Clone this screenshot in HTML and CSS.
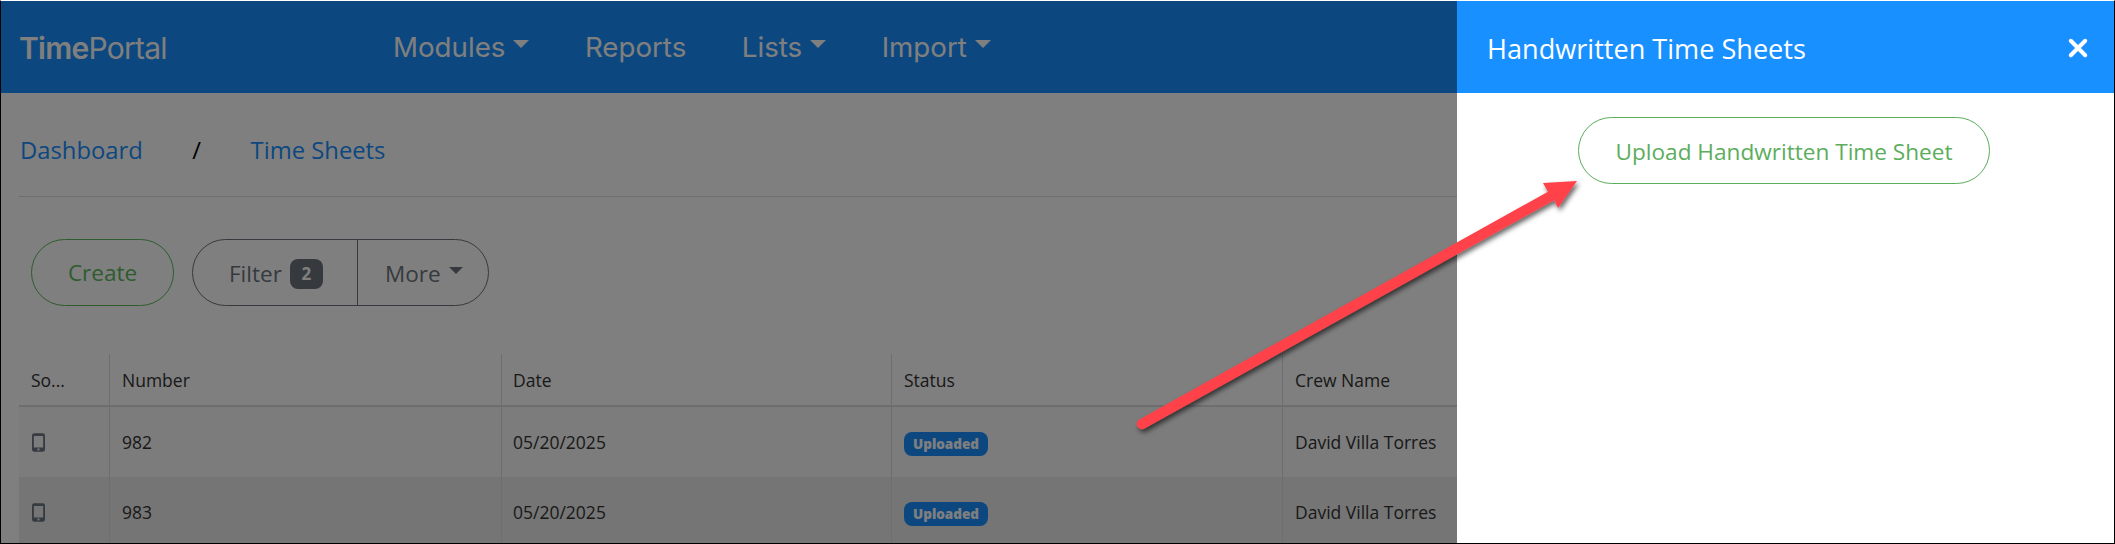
FILE: index.html
```html
<!DOCTYPE html>
<html lang="en">
<head>
<meta charset="utf-8">
<title>Handwritten Time Sheets</title>
<link rel="stylesheet" href="styles.css">
</head>
<body>
<div class="frame">
  <div class="app">
    <header class="topbar">
      <div class="brand"><b>Time</b>Portal</div>
      <nav class="nav">
        <span class="nav-item">Modules<i class="caret"></i></span>
        <span class="nav-item">Reports</span>
        <span class="nav-item">Lists<i class="caret"></i></span>
        <span class="nav-item">Import<i class="caret"></i></span>
      </nav>
    </header>
    <div class="crumbs">
      <span class="crumb">Dashboard</span>
      <span class="sep">/</span>
      <span class="crumb">Time Sheets</span>
    </div>
    <div class="toolbar">
      <button class="btn-create">Create</button>
      <div class="btn-group">
        <span class="filter">Filter <span class="count">2</span></span>
        <span class="more">More<i class="caret small"></i></span>
      </div>
    </div>
    <div class="table">
      <div class="row head">
        <div class="cell c1">So...</div>
        <div class="cell c2">Number</div>
        <div class="cell c3">Date</div>
        <div class="cell c4">Status</div>
        <div class="cell c5">Crew Name</div>
      </div>
      <div class="row body">
        <div class="cell c1"><svg class="phone" viewBox="0 0 14 20"><path fill-rule="evenodd" d="M2.5 0h9A2.5 2.5 0 0 1 14 2.5v15a2.5 2.5 0 0 1-2.5 2.5h-9A2.5 2.5 0 0 1 0 17.500v-15A2.500 2.500 0 0 1 2.500 0zM2 3v12.500h10V3zM7 16.300a1.200 1.200 0 1 0 0 2.400 1.200 1.200 0 0 0 0-2.400z"/></svg></div>
        <div class="cell c2">982</div>
        <div class="cell c3">05/20/2025</div>
        <div class="cell c4"><span class="badge">Uploaded</span></div>
        <div class="cell c5">David Villa Torres</div>
      </div>
      <div class="row body alt">
        <div class="cell c1"><svg class="phone" viewBox="0 0 14 20"><path fill-rule="evenodd" d="M2.5 0h9A2.5 2.5 0 0 1 14 2.5v15a2.5 2.5 0 0 1-2.5 2.5h-9A2.5 2.5 0 0 1 0 17.500v-15A2.500 2.500 0 0 1 2.500 0zM2 3v12.500h10V3zM7 16.300a1.200 1.200 0 1 0 0 2.400 1.200 1.200 0 0 0 0-2.400z"/></svg></div>
        <div class="cell c2">983</div>
        <div class="cell c3">05/20/2025</div>
        <div class="cell c4"><span class="badge">Uploaded</span></div>
        <div class="cell c5">David Villa Torres</div>
      </div>
    </div>
    <div class="scrim"></div>
  </div>
  <aside class="panel">
    <div class="panel-head">
      <span class="panel-title">Handwritten Time Sheets</span>
      <svg class="close" viewBox="0 0 20 20"><path d="M2 2l16 16M18 2L2 18"/></svg>
    </div>
    <div class="panel-body">
      <button class="btn-upload">Upload Handwritten Time Sheet</button>
    </div>
  </aside>
  <svg class="arrow" viewBox="0 0 2115 544" width="2115" height="544">
    <defs>
      <filter id="sh" x="-10%" y="-10%" width="120%" height="120%"><feDropShadow dx="2" dy="3" stdDeviation="2.500" flood-color="#000" flood-opacity=".6"/></filter>
    </defs>
    <g filter="url(#sh)">
      <path d="M1142 424L1551 196" stroke="#ff4248" stroke-width="10.500" stroke-linecap="round" fill="none"/>
      <path d="M1577 181L1543 183L1548 192L1554 200L1558 208Z" fill="#ff4248"/>
    </g>
  </svg>
</div>
</body>
</html>
```
FILE: styles.css
```css
* { box-sizing: border-box; }
html, body { margin: 0; padding: 0; background: #fff; }
body { width: 2115px; height: 544px; overflow: hidden; }
.frame { position: relative; display: flex; width: 2115px; height: 544px; border-top: 1px solid #fff; border-left: 1px solid #000; border-right: 1px solid #000; border-bottom: 1px solid #000; background: #fff; overflow: hidden; }
.app { position: relative; width: 1456px; height: 542px; background: #fff; overflow: hidden; flex: none; }
.scrim { position: absolute; inset: 0; background: rgba(0,0,0,.5); }
.topbar { display: flex; align-items: center; height: 92px; background: #1890ff; font-family: Inter, sans-serif; color: #fff; }
.brand { width: 392px; padding-left: 18px; padding-top: 1px; font-size: 30px; letter-spacing: -.75px; }
.brand b { font-weight: 600; }
.nav { display: flex; gap: 55.500px; font-size: 27.700px; }
.nav-item { display: flex; align-items: center; }
.caret { display: inline-block; border: 8px solid transparent; border-top: 8px solid currentColor; border-bottom: 0; margin-left: 8px; margin-top: -6px; }
.caret.small { border-width: 7px 7px 0; margin-left: 8px; margin-top: -6px; }
.crumbs { display: flex; height: 104px; margin-left: 18px; padding: 11px 0 0 1px; align-items: center; font: 23.800px "Open Sans", sans-serif; color: #1890ff; border-bottom: 1px solid #ddd; }
.sep { margin: 0 49.500px; color: #000; }
.toolbar { display: flex; gap: 18px; padding: 42px 0 0 30px; height: 157px; font: 22.500px "Open Sans", sans-serif; }
.btn-create { width: 143px; height: 67px; padding-top: 1px; border-radius: 34px; border: 1px solid #5cb85c; background: #fff; color: #5cb85c; font: inherit; }
.btn-group { display: flex; height: 67px; width: 297px; border: 1px solid #6c757d; border-radius: 34px; color: #6c757d; }
.filter { display: flex; align-items: center; gap: 8px; width: 165px; padding: 2px 0 0 36px; border-right: 1px solid #6c757d; }
.count { display: inline-flex; align-items: center; justify-content: center; width: 33px; height: 30px; border-radius: 8px; background: #6c757d; color: #fff; font-size: 17px; font-weight: 700; }
.more { display: flex; align-items: center; padding: 2px 0 0 27px; }
.table { margin-left: 18px; font: 17.500px "Open Sans", sans-serif; color: #333; }
.row { display: flex; }
.head { height: 53px; border-bottom: 2px solid #ddd; }
.body { height: 70px; background: #f8f8f8; }
.alt { background: #ebebeb; }
.cell { display: flex; align-items: center; padding-left: 12px; border-right: 1px solid #ddd; flex: none; height: 100%; }
.c1 { width: 91px; }
.c2 { width: 392px; }
.c3 { width: 390px; padding-left: 11px; }
.c4 { width: 391px; }
.c5 { width: 200px; border-right: 0; }
.phone { width: 13px; height: 19px; margin-left: 1px; fill: #6c7684; }
.badge { display: inline-block; margin-top: 3px; padding: 0 9px; height: 24px; line-height: 24px; border-radius: 8px; background: #1890ff; color: #fff; font-size: 13.500px; font-weight: 800; }
.panel { width: 657px; flex: none; background: #fff; font-family: "Open Sans", sans-serif; }
.panel-head { display: flex; align-items: center; justify-content: space-between; height: 92px; padding: 0 27px 0 30px; background: #1890ff; color: #fff; font-size: 27.100px; }
.panel-title { padding-top: 2px; }
.close { width: 18px; height: 18px; margin-top: 1px; fill: none; stroke: #fff; stroke-width: 4.500; stroke-linecap: round; overflow: visible; }
.panel-body { display: flex; padding: 24px 0 0 121px; }
.btn-upload { width: 412px; height: 67px; padding-top: 2px; border: 1px solid #5cad5c; border-radius: 34px; background: #fff; color: #5cad5c; font: 22.600px "Open Sans", sans-serif; }
.arrow { position: absolute; left: -1px; top: -1px; pointer-events: none; }
```
